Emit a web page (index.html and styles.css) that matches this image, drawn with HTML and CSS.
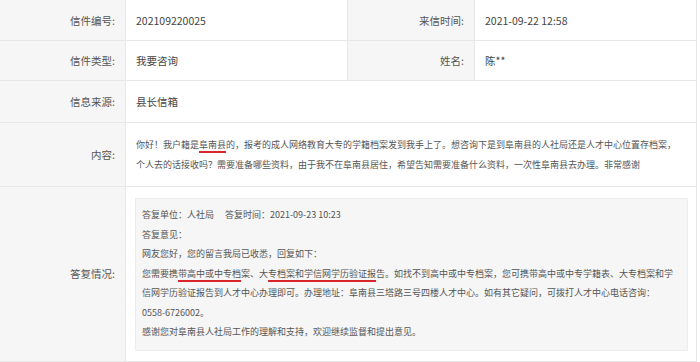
FILE: index.html
```html
<!DOCTYPE html>
<html lang="zh-CN">
<head>
<meta charset="utf-8">
<title>信件详情</title>
<link rel="stylesheet" href="styles.css">
</head>
<body>
<div class="detail">
  <div class="cell label r1">信件编号:</div>
  <div class="cell value r1">202109220025</div>
  <div class="cell label r1">来信时间:</div>
  <div class="cell value r1 last">2021-09-22 12:58</div>

  <div class="cell label r2">信件类型:</div>
  <div class="cell value r2">我要咨询</div>
  <div class="cell label r2">姓名:</div>
  <div class="cell value r2 last">陈**</div>

  <div class="cell label r3">信息来源:</div>
  <div class="cell value wide r3">县长信箱</div>

  <div class="cell label r4">内容:</div>
  <div class="cell value wide content r4">你好！我户籍是<span class="mark">阜南县</span>的，报考的成人网络教育大专的学籍档案发到我手上了。想咨询下是到阜南县的人社局还是人才中心位置存档案，<br>个人去的话接收吗？需要准备哪些资料，由于我不在阜南县居住，希望告知需要准备什么资料，一次性阜南县去办理。非常感谢</div>

  <div class="cell label r5">答复情况:</div>
  <div class="cell value wide reply-cell r5">
    <div class="reply">
      <p>答复单位：人社局<span class="gap">答复时间：2021-09-23 10:23</span></p>
      <p>答复意见：</p>
      <p>网友您好，您的留言我局已收悉，回复如下：</p>
      <p>您需要携<span class="mark">带高中或中专档</span>案、大<span class="mark">专档案和学信网学历验证报</span>告。如找不到高中或中专档案，您可携带高中或中专学籍表、大专档案和学信网学历验证报告到人才中心办理即可。办理地址：阜南县三塔路三号四楼人才中心。如有其它疑问，可拨打人才中心电话咨询：<span class="phone">0558-6726002。</span></p>
      <p>感谢您对阜南县人社局工作的理解和支持，欢迎继续监督和提出意见。</p>
    </div>
  </div>
</div>
</body>
</html>
```

FILE: styles.css
```css
* { box-sizing: border-box; }

html, body {
  margin: 0;
  padding: 0;
  background: #ffffff;
}

body {
  font-family: "Noto Sans CJK SC", "Noto Sans", sans-serif;
  color: #444;
}

.detail {
  width: 697px;
  display: grid;
  grid-template-columns: 126px 222px 127px 222px;
  grid-template-rows: 41px 40px 42px 64px auto;
}

.cell {
  display: flex;
  align-items: center;
  border-right: 1px solid #e7e7e7;
  border-bottom: 1px solid #e7e7e7;
  font-size: 10.5px;
}

.label {
  justify-content: flex-end;
  padding-right: 10px;
  background: #f6f6f6;
  color: #555;
}

.value {
  padding-left: 10px;
  background: #ffffff;
  color: #444;
}

.wide {
  grid-column: span 3;
}

.content {
  display: block;
  align-self: stretch;
  padding: 12px 4px 0 10px;
  font-size: 9px;
  line-height: 20px;
  color: #555;
}

.reply-cell {
  display: block;
  padding: 11px 8px 10px 9px;
}

.reply {
  background: #f6f6f6;
  border: 1px solid #ededed;
  padding: 6px 6px 8px 6px;
  font-size: 9px;
  line-height: 19.5px;
  color: #555;
}

.reply p {
  margin: 0;
}

.gap {
  margin-left: 11px;
}

.phone {
  white-space: nowrap;
}

.mark {
  text-decoration: underline;
  text-decoration-color: #d9262c;
  text-decoration-thickness: 2px;
  text-underline-offset: 3px;
}
```
